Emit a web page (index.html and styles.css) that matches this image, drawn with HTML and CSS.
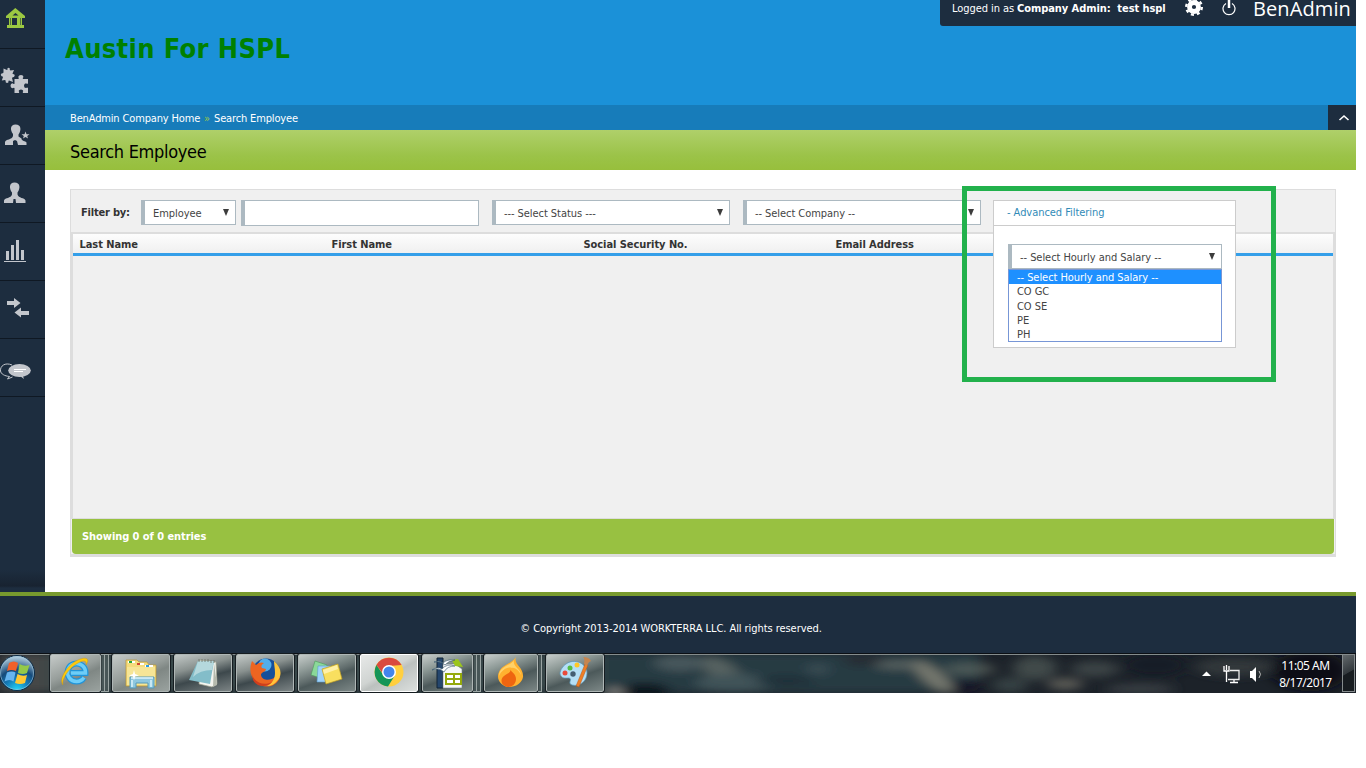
FILE: index.html
```html
<!DOCTYPE html>
<html lang="en">
<head>
<meta charset="utf-8">
<title>Search Employee</title>
<link rel="stylesheet" href="styles.css">
</head>
<body>
<div class="screen">
  <div class="app">
    <nav class="sidebar">
      <a class="nav nav-first"><svg width="45" height="48"><path d="M15.300 8L25 16V18H6V16Z" fill="#9bc842"/><path d="M9 17H22V25H24V28H7V25H9Z" fill="#9bc842"/><path d="M12 18h5v7h-5z" fill="#1d2d3f"/><path d="M10 18h.8v7H10zM20 18h.8v7H20z" fill="#1d2d3f" opacity=".7"/><path d="M12.500 15.500h6l-3-2.500z" fill="#1d2d3f"/></svg></a>
      <a class="nav"><svg width="45" height="57" fill="#c3c6cc"><path d="M3.500 19.500l3.500 1.500q1-.5.300-1.500 1.500-1.500 2.500 0-.5 1.500.7 2l3.500-.5-1.500 3.500q.5 1.200 1.500.5 1.500 1.500 0 3-1.500 0-2 1l1 4-4-1.500q-1 .3-.5 1.800-1.500 1.500-2.800 0 .3-1.700-.7-2.300l-3.200.5 1.200-3.500q-.5-1-1.500-.7-1.500-1.500 0-2.800 1.500 0 2-1z"/><path d="M14.500 30h4q.8-.8-.3-2 .5-2 2.800-2t2.500 2q-1.300 1.200-.5 2h5v4.500q-.8.800-2-.3-2 .3-2 2.500t2 2.400q1.200-1 2-.2V44h-5q-.7-.8.300-2-.3-1.500-2.300-1.500t-2.400 1.500q1 1.200.4 2h-4.500v-5q-.8-.7-2 .3-2-.3-2-2.500t2-2.500q1.200 1.200 2 .5z"/></svg></a>
      <a class="nav"><svg width="45" height="57" fill="#c3c6cc"><path d="M15.500 17.500c6 0 6 6 3 10v2l3 2c0 3 4 2 5 4v2.500H18l-1-4-2-1-2 1v4H5v-3c1-3 7-2 8-6v-2c-3-4-3-9.500 2.500-9.500z"/><path d="M25.500 24.500l1 2.700h3l-2.300 1.700.8 2.600-2.500-1.600-2.500 1.600.8-2.600-2.300-1.700h3z"/></svg></a>
      <a class="nav"><svg width="45" height="57" fill="#c3c6cc"><path d="M14.500 17.500c6 0 6 6 3 10v2c1 4 7 3 8 6v2.500H16l-.5-4h-2l-.5 4H4v-2.500c1-3 7-2 8-6v-2c-3-4-3-10 2.500-10z"/></svg></a>
      <a class="nav"><svg width="45" height="57" fill="#c3c6cc"><path d="M6 28h3v9H6zM11 22h3v15h-3zM16 17h3v20h-3zM21 27h3v10h-3zM4 38h22v1H4z"/></svg></a>
      <a class="nav"><svg width="45" height="57" fill="#c3c6cc"><path d="M7 20h7v-3l6.500 5-6.500 5v-3H7zM29 30h-8v-3.500l-6.500 5 6.500 5V34h8z"/></svg></a>
      <a class="nav"><svg width="45" height="57"><path d="M12 26c-7-3-12 1-11.500 6 .5 3 4 5 9 5.500l-2 2.500 5-2" fill="none" stroke="#c3c6cc"/><ellipse cx="19.500" cy="31.500" rx="11.300" ry="6.500" fill="#c3c6cc"/><path d="M17 37l3 0 4 3-1.500-4z" fill="#c3c6cc"/><path d="M14 30.500h12M14 32.500h9" stroke="#fff"/></svg></a>
    </nav>
    <main class="main">
      <header class="header">
        <h1 class="company">Austin For HSPL</h1>
        <div class="userbar">
          <span class="login">Logged in as <b>Company Admin:&nbsp; test hspl</b></span>
          <svg class="gear" width="18" height="18" viewBox="0 0 18 18"><circle cx="9" cy="9" r="4.500" fill="none" stroke="#fff" stroke-width="4.800"/><circle cx="9" cy="9" r="7.800" fill="none" stroke="#fff" stroke-width="2.400" stroke-dasharray="3.060 3.060"/></svg>
          <svg class="power" width="14" height="18" viewBox="0 0 14 18"><path d="M4 5.500a6 6 0 1 0 6 0" fill="none" stroke="#fff" stroke-width="1.200"/><path d="M7 1v9" stroke="#fff" stroke-width="2.500"/></svg>
          <span class="brand">BenAdmin</span>
        </div>
      </header>
      <div class="crumbs"><span class="crumb1">BenAdmin Company Home</span><span class="sep">»</span><span class="crumb2">Search Employee</span>
        <span class="collapse"><svg width="12" height="8" viewBox="0 0 12 8"><path d="M1.500 6L6 2l4.500 4" fill="none" stroke="#fff" stroke-width="1.600"/></svg></span></div>
      <h2 class="title"><span>Search Employee</span></h2>
      <section class="panel">
        <div class="filters">
          <b class="filter-label">Filter by:</b>
          <div class="select s-kind"><span>Employee</span><i class="caret"></i></div>
          <div class="textbox"></div>
          <div class="select s-status"><span>--- Select Status ---</span><i class="caret"></i></div>
          <div class="select s-company"><span>-- Select Company --</span><i class="caret"></i></div>
        </div>
        <div class="grid">
          <div class="columns"><b>Last Name</b><b>First Name</b><b>Social Security No.</b><b>Email Address</b></div>
          <div class="rows"></div>
        </div>
        <div class="summary"><span>Showing 0 of 0 entries</span></div>
        <div class="advanced">
          <div class="adv-head"><span>- Advanced Filtering</span></div>
          <div class="select s-pay"><span>-- Select Hourly and Salary --</span><i class="caret"></i>
          </div>
          <div class="options"><div class="on"><span>-- Select Hourly and Salary --</span></div><div>CO GC</div><div>CO SE</div><div>PE</div><div>PH</div></div>
        </div>
        <div class="highlight"></div>
      </section>
    </main>
  </div>
  <footer class="footer"><span>© Copyright 2013-2014 WORKTERRA LLC. All rights reserved.</span></footer>
  <div class="taskbar">
    <svg class="wall" width="1356" height="40">
      <defs><filter id="soft" x="-20%" y="-50%" width="140%" height="200%"><feGaussianBlur stdDeviation="7 4"/></filter></defs>
      <rect width="1356" height="40" fill="#1c2229"/>
      <g filter="url(#soft)">
        <rect width="48" height="40" fill="#454747"/><rect x="48" width="560" height="40" fill="#384648"/>
        <rect x="600" width="380" height="40" fill="#273b43"/>
        <ellipse cx="645" cy="38" rx="25" ry="8" fill="#11131f"/><ellipse cx="615" cy="40" rx="9" ry="6" fill="#7b7b78"/>
        <g opacity=".75"><ellipse cx="680" cy="10" rx="26" ry="8" fill="#516164"/><ellipse cx="722" cy="18" rx="22" ry="10" fill="#66706b" transform="rotate(30 722 18)"/>
        <ellipse cx="735" cy="30" rx="40" ry="9" fill="#4a5c61"/><ellipse cx="785" cy="28" rx="30" ry="5" fill="#172a33"/>
        <ellipse cx="818" cy="16" rx="12" ry="6" fill="#405157"/><ellipse cx="865" cy="8" rx="22" ry="5" fill="#25242e"/>
        <ellipse cx="900" cy="12" rx="26" ry="4" fill="#69706b"/><ellipse cx="933" cy="24" rx="24" ry="8" fill="#918d7d" transform="rotate(38 933 24)"/>
        <ellipse cx="970" cy="16" rx="26" ry="6" fill="#59625d"/></g>
        <ellipse cx="968" cy="34" rx="16" ry="8" fill="#131226"/>
        <ellipse cx="1035" cy="15" rx="22" ry="12" fill="#3f4849"/><ellipse cx="1065" cy="31" rx="18" ry="6" fill="#5c5b56"/>
        <ellipse cx="1010" cy="32" rx="18" ry="8" fill="#354142"/>
        <ellipse cx="1095" cy="16" rx="24" ry="8" fill="#3b4344"/><ellipse cx="1155" cy="12" rx="32" ry="12" fill="#171c25"/>
        <ellipse cx="1140" cy="36" rx="35" ry="5" fill="#3b4144"/><ellipse cx="1235" cy="14" rx="40" ry="9" fill="#30373a"/>
        <ellipse cx="1310" cy="18" rx="38" ry="20" fill="#0d1118"/>
      </g>
      <path d="M0 .5H1356" stroke="#0b0f14"/><path d="M0 1.500H1342" stroke="#858c8c"/>
    </svg>
    <div class="orb"><svg width="38" height="40"><defs><radialGradient id="ob" cx=".5" cy="1" r="1"><stop offset="0" stop-color="#23dcfb"/><stop offset=".35" stop-color="#147ab7"/><stop offset=".6" stop-color="#164a7a"/><stop offset="1" stop-color="#c4dce9"/></radialGradient></defs><circle cx="17" cy="20" r="17.500" fill="url(#ob)" stroke="#0c2b47"/><circle cx="17" cy="20" r="16.500" fill="none" stroke="#9bc3d8" opacity=".6"/><path d="M9 10q5-3 9 0l-2 8q-5-2-9 0z" fill="#f1602a"/><path d="M19.500 11q5 3 10 1l-2.500 8q-4 2-9 0z" fill="#94c948"/><path d="M7 19.500q5-2 8.500 0l-2 9q-4-3-9 0z" fill="#67b4ef"/><path d="M17.500 21q5 3 9.500 1l-2 8q-5 2-10 0z" fill="#ffc832"/></svg></div>
    <div class="task task-ie"><svg width="32" height="32"><path d="M24 20.500a9 9 0 1 1 1.500-4.500H11" fill="none" stroke="#2294d8" stroke-width="6"/><path d="M24 20.500a9 9 0 1 1 1.500-4.500H11" fill="none" stroke="#6dcdf8" stroke-width="3.500"/><path d="M3 28C-2 22 8 7 18 3c9-4 12-1 8 5 1-5-3-5-8-2C8 11 1 24 3 28z" fill="#ffc90c" stroke="#c99408" stroke-width=".4"/></svg></div>
    <div class="stack"></div><div class="stack stack-end"></div>
    <div class="task task-files"><svg width="34" height="32"><path d="M2 3h11l2 2h8l2 3h7v21H2z" fill="#f4dc7c" stroke="#b99637" stroke-width=".7"/><path d="M3 10h28v18H3z" fill="#f6e596"/><path d="M4 4h7v2H4z" fill="#fff"/><path d="M5 4h3v2H5z" fill="#20a839"/><path d="M13 6h7v2h-7z" fill="#fff"/><path d="M13 6h3v2h-3z" fill="#d44631"/><path d="M21 8h8v2h-8z" fill="#fff"/><path d="M22 8h3v2h-3z" fill="#299be5"/><path d="M6 20h24v11h-6v-5H12v5H6z" fill="#8ec7df" stroke="#5599ba"/><path d="M7 21h22M8 23v7M27 23v7" stroke="#dcf4fc" stroke-width="1.500"/><path d="M5 18.500l4-1.500 1-4 1 4 4 1.500-4 1-1 4-1-4z" fill="#fff"/></svg></div>
    <div class="task task-note"><svg width="34" height="32"><path d="M14 3l16 2 1 22-5 3-13-3z" fill="#f3f4ef" stroke="#9c9f8d" stroke-width=".7"/><path d="M28 6l3 22-4 2z" fill="#b5b9ad"/><path d="M12 4h16l-4 23-21-4z" fill="#83bdc9"/><path d="M12 4h16l-2 9Q14 13 7 20z" fill="#b5d8dd"/><path d="M13 2v3M16 2v3M19 2v3M22 2v3M25 3v3M28 3v3" stroke="#697063" stroke-width=".8"/></svg></div>
    <div class="task task-fox"><svg width="34" height="32"><circle cx="18" cy="15" r="13.500" fill="#174f9b"/><circle cx="17" cy="8" r="6.500" fill="#54aeea"/><path d="M4 4l4 4c3-3 6-3 8-2-3 2-3 4-2 5l4 1c0 3-5 3-5 6 1 6 10 6 14 2l5 0c-3 10-16 13-24 5C2 19 1 12 4 4z" fill="#ed6521"/><path d="M26 4c7 6 9 14 3 20-2 3-6 5-10 5 6-3 8-8 8-13 0-5-1-8-1-12z" fill="#ffc43a"/><path d="M4 17c2 9 13 12 20 8-5 6-16 5-19-2z" fill="#cf3e1d"/></svg></div>
    <div class="task task-sticky"><svg width="34" height="32"><path d="M5 4l12 4-3 14-13-4z" fill="#8bd899" stroke="#4d995b" stroke-width=".6"/><path d="M8 9h13v16H7z" fill="#9ed2fa" stroke="#5c9bcb" stroke-width=".6"/><path d="M12 12l16-5 4 15-16 5z" fill="#f8df5f" stroke="#bf9e22" stroke-width=".7"/><path d="M13 13l14-5 1 4-14 5z" fill="#fff0a5"/></svg></div>
    <div class="task task-chrome"><svg width="34" height="32"><circle cx="17" cy="15" r="14.500" fill="#ffcf3f"/><path d="M4.400 8A14.500 14.500 0 0 1 29.600 8L17 9l-5 9z" fill="#d94a40"/><path d="M4.400 8A14.500 14.500 0 0 0 16 29.500L22.500 19 12 19z" fill="#159557"/><circle cx="17" cy="15" r="7" fill="#fff"/><circle cx="17" cy="15" r="5.500" fill="#4385ec"/></svg></div>
    <div class="task task-calc"><svg width="32" height="34"><path d="M5 2h6v30H5z" fill="#25466d" stroke="#132436"/><path d="M11 8h12l7 5v19H11z" fill="#f5f7f8" stroke="#6e7c83" stroke-width=".6"/><path d="M20 4l6-1 5 8-8-1z" fill="#9bc51c"/><path d="M13 17h17v12H13z" fill="#94a90b"/><path d="M15 19h6v3h-6zM23 19h5v3h-5zM15 24h6v3h-6zM23 24h5v3h-5z" fill="#fff"/><path d="M2 6q5-2 9 1 4-4 12-3-7 1-10 5-4-4-11-3zM0 14q6-4 10-1 5-6 13-3-8 0-11 6-5-5-12-2z" fill="#fff" stroke="#315066" stroke-width=".6"/></svg></div>
    <div class="stack"></div><div class="stack stack-end"></div>
    <div class="task task-flame"><svg width="34" height="32"><path d="M22 0c-3 7 8 10 7 20-1 6-7 10-14 10C6 29 1 21 6 13 9 8 17 7 22 0z" fill="#ffb12f"/><path d="M20 3c-2 6 7 9 7 15-2-5-7-8-9-7C13 9 7 14 5 19 5 9 17 9 20 3z" fill="#ffd269"/><path d="M17 12c-1 3 5 4 5 10 0 5-4 8-8 8-6-1-9-7-4-11 3-3 6-2 7-7z" fill="#ee6510"/></svg></div>
    <div class="stack stack-end"></div>
    <div class="task task-paint"><svg width="34" height="32"><path d="M8 7c8-6 21-1 21 9 0 8-7 14-15 12-5-2 1-6-3-7-4 0-7 1-9-4 0-4 3-8 6-10z" fill="#b5dff5" stroke="#5796b9" stroke-width=".7"/><circle cx="7" cy="16" r="2.500" fill="#e94b3b"/><circle cx="12" cy="11" r="2.500" fill="#55bd45"/><circle cx="19" cy="8" r="2.500" fill="#ffc825"/><circle cx="15" cy="17" r="2.700" fill="#445e72"/><path d="M27 7l3 1-9 22-3-1z" fill="#ed7e26" stroke="#a54e13" stroke-width=".4"/><path d="M26 7q1-6-1-7 6 0 8 4-3 1-4 5z" fill="#c6854f"/></svg></div>
    <div class="tray"><svg width="66" height="24"><path d="M5.500 9.500L10 14H1z" fill="#fff"/><path d="M29 8.500h9v9h-11" fill="none" stroke="#eee" stroke-width="1.300"/><path d="M23 4v5h5V4M25.500 3v5M25.500 9v11M33 18v2M29 20.500h8" fill="none" stroke="#fff" stroke-width="1.300"/><path d="M49 9h2l4-4v15l-4-4h-2z" fill="#fff"/><path d="M58 9q3 3 0 7" fill="none" stroke="#bbb"/></svg>
      <div class="clock"><span class="time">11:05 AM</span><span class="date">8/17/2017</span></div><div class="desk"></div>
    </div>
  </div>
</div>
</body>
</html>
```
FILE: styles.css
```css
* { box-sizing: border-box; }
body { margin: 0; background: #fff; font-family: "DejaVu Sans Condensed", "DejaVu Sans", sans-serif; font-stretch: condensed; font-size: 11px; letter-spacing: -.06px; color: #333; overflow: hidden; }
.screen { width: 1356px; }
.app { display: flex; height: 592px; }
.sidebar { width: 45px; background: linear-gradient(#1d2d3f 0 570px, #182331 586px, #1d2d3f 588px); }
.nav { display: block; height: 58px; border-bottom: 1px solid #0f1823; }
.nav svg { display: block; }
.nav-first { height: 49px; }
.main { flex: 1; min-width: 0; }
.header { height: 105px; background: #1b91d8; display: flex; justify-content: space-between; }
.company { margin: 32px 0 0 20px; font-weight: bold; font-size: 27px; line-height: 34px; letter-spacing: .35px; color: #008000; white-space: nowrap; }
.userbar { width: 416px; height: 26px; background: #1d2d3f; border-bottom-left-radius: 3px; color: #fff; display: flex; align-items: flex-start; padding-left: 12px; white-space: nowrap; }
.login { line-height: 17px; width: 233px; letter-spacing: -.07px; }
.gear { margin-top: -2px; }
.power { margin: -2px 0 0 19px; }
.brand { font-family: "Open Sans", sans-serif; font-stretch: normal; font-size: 20px; line-height: 17px; letter-spacing: .1px; margin: 0 0 0 17px; }
.crumbs { height: 25px; background: #177cba; color: #fff; display: flex; align-items: center; padding: 1px 0 0 25px; white-space: nowrap; letter-spacing: -.15px; }
.sep { color: #9bc842; width: 14px; text-align: center; }
.crumb1 { width: 130px; }
.collapse { width: 28px; height: 25px; background: #1d2d3f; margin: -1px 0 0 auto; display: flex; align-items: center; justify-content: center; padding-left: 4px; }
.title { margin: 0; height: 40px; background: linear-gradient(#afd06a, #9bc348 65%, #97bf3c); color: #000; font-size: 18px; line-height: 43px; font-weight: normal; letter-spacing: -.3px; padding-left: 25px; }
.panel { position: relative; margin: 19px 20px 0 25px; height: 368px; border: 1px solid #ddd; border-bottom-width: 3px; background: #f0f0f0; }
.filters { height: 42px; padding: 10px 0 0 10px; display: flex; align-items: flex-start; }
.filter-label { width: 60px; line-height: 25px; letter-spacing: -.2px; }
.select { height: 25px; border: 1px solid #acb9c1; border-left-width: 4px; background: #fff; display: flex; align-items: center; justify-content: space-between; padding: 1px 6px 0 8px; color: #444; white-space: nowrap; }
.caret { border: 3.500px solid transparent; border-top: 7px solid #3c3c3c; border-bottom: 0; margin-bottom: 2px; }
.s-kind { width: 95px; margin-right: 5px; }
.textbox { width: 238px; height: 26px; border: 1px solid #acb9c1; border-left-width: 4px; background: #fff; margin-right: 13px; }
.s-status { width: 238px; margin-right: 13px; }
.s-company { width: 238px; }
.grid { border: solid #ddd; border-width: 2px 2px 1px; height: 287px; }
.columns { height: 22px; border-bottom: 3px solid #349fe9; background: linear-gradient(#fdfdfd, #f0f0f0); display: grid; grid-template-columns: 252px 252px 252px 1fr; padding-left: 6.500px; line-height: 21px; white-space: nowrap; }
.summary { margin: 0 1px; height: 35px; background: #98c141; border-radius: 0 0 4px 4px; color: #fff; font-weight: bold; line-height: 35px; padding-left: 10px; }
.advanced { position: absolute; left: 922px; top: 10px; width: 243px; height: 148px; border: 1px solid #ccc; background: #fff; letter-spacing: -.05px; }
.adv-head { height: 25px; border-bottom: 1px solid #ccc; color: #328bb8; line-height: 23px; padding-left: 13px; }
.s-pay { width: 214px; margin: 18px 0 0 14px; }
.options { width: 214px; height: 73px; margin-left: 14px; border: 1px solid #7796d6; background: #fff; color: #444; line-height: 15px; white-space: nowrap; }
.options div { height: 14.300px; padding-left: 8px; }
.options .on { background: #1e90ff; color: #fff; }
.highlight { position: absolute; left: 891px; top: -4px; width: 314px; height: 196px; border: 5px solid #22b14c; }
.footer { height: 61px; border-top: 4px solid #789a2e; background: #1d2d3f; color: #fff; display: flex; align-items: center; justify-content: center; padding: 8px 14px 0 0; }
.taskbar { position: relative; height: 40px; display: flex; align-items: flex-start; padding-top: 1px; overflow: hidden; }
.wall { position: absolute; left: 0; top: 0; }
.orb { position: relative; width: 50px; height: 40px; margin-top: -1px; }
.task { position: relative; width: 58px; height: 38px; margin-right: 4px; border: 1px solid #aeb6b5; border-radius: 2px; outline: 1px solid #151c20; outline-offset: 0; display: flex; align-items: center; justify-content: center; background: linear-gradient(160deg, #c6ccca 0%, #8d9996 30%, #606c6c 52%, #4c595a 60%, #7c8786 100%); }
.task-ie, .task-calc { width: 51px; margin-right: 0; }
.task-ie, .task-files { background: linear-gradient(155deg, #c5cac8, #979e9b 45%, #7f8784 60%, #9aa29f); }
.task-note, .task-fox { background: linear-gradient(165deg, #c3c9c7, #89918f 35%, #3d484c 60%, #7b8384); }
.task-chrome { background: linear-gradient(150deg, #e7e9e8, #d0d4d2 45%, #bcc1bf 55%, #dce0de); border-color: #fff; }
.task-flame { width: 54px; margin-right: 0; }
.stack { position: relative; width: 4px; height: 38px; border: solid #9aa4a3; border-width: 1px 1px 1px 0; background: #58656680; }
.stack-end { margin-right: 3px; }
.task-paint { margin-left: 1px; }
.tray { position: relative; display: flex; margin-left: auto; height: 38px; color: #fff; }
.tray svg { margin: 8px 8px 0 0; }
.clock { display: flex; flex-direction: column; align-items: center; width: 62px; font: 12px/17px "Noto Sans", sans-serif; letter-spacing: -.5px; padding: 3px 1px 0 0; white-space: nowrap; }
.desk { width: 13px; border: 1px solid #858b8d; background: linear-gradient(150deg, #63696c, #33393d 48%, #171c20 50%); margin: 0 1px 0 5px; }
```
